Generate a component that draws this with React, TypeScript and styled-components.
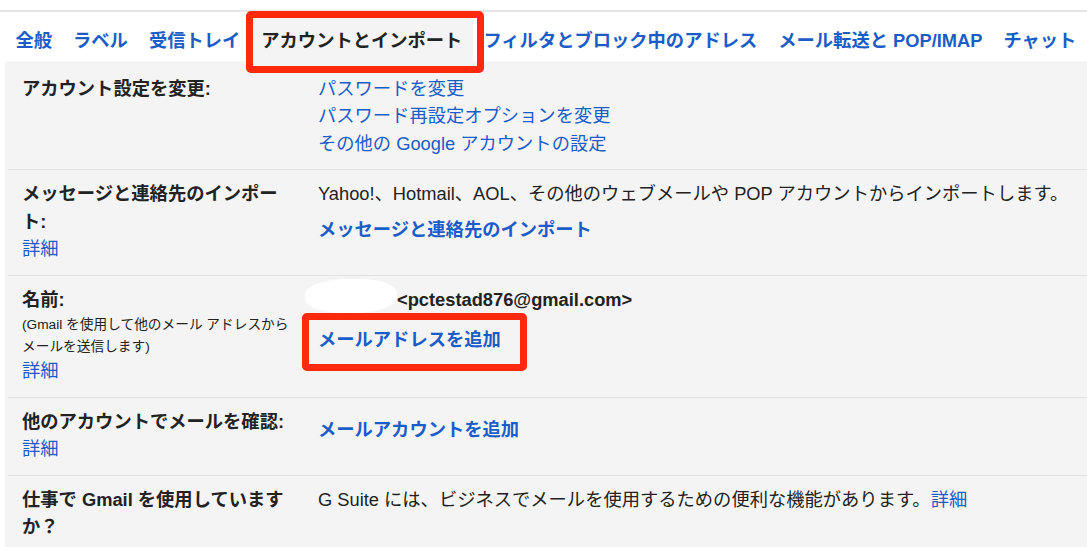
import React from "react";
import styled, { createGlobalStyle } from "styled-components";

const GlobalStyle = createGlobalStyle`
    html, body {
        margin: 0;
        padding: 0;
        background: #ffffff;
    }

    body {
        font-family: "Liberation Sans", "Noto Sans CJK JP", sans-serif;
        color: #222222;
        overflow: hidden;
    }
`;

const Page = styled.div`
    width: 1087px;
    height: 547px;
    padding-top: 10px;
    box-sizing: border-box;
    overflow: hidden;
`;

const TabBar = styled.nav`
    border-top: 2px solid #e6e6e6;
    display: flex;
    padding-left: 5px;
    white-space: nowrap;
`;

const Tab = styled.a<{ $active?: boolean }>`
    position: relative;
    display: block;
    padding: 15px 10.5px 6px;
    font-size: 18.3px;
    line-height: 27.5px;
    font-weight: bold;
    color: ${props => props.$active ? "#222222" : "#1b5dc8"};
    background: ${props => props.$active ? "#f4f4f4" : "transparent"};
    cursor: pointer;

    ${props => props.$active && `
        &::after {
            content: "";
            position: absolute;
            left: -5px;
            right: -11px;
            top: -1px;
            bottom: -12px;
            border: 7px solid #ff2a0c;
            border-radius: 5px;
            z-index: 2;
        }
    `}
`;

const Panel = styled.div`
    margin-left: 5px;
    padding-left: 3px;
    background: #f4f4f4;
    height: 100%;
`;

const Row = styled.div<{ $first?: boolean }>`
    display: flex;
    gap: 22px;
    padding: ${props => props.$first ? "14px" : "10px"} 0 12px 14px;
    border-bottom: 1px solid #e2e2e2;
    font-size: 18.3px;
    line-height: 27.5px;
`;

const Label = styled.div`
    width: 274px;
    flex-shrink: 0;
`;

const LabelTitle = styled.div`
    font-weight: bold;
`;

const Note = styled.div`
    font-size: 13.7px;
    line-height: 21.5px;
    margin-top: 1px;
`;

const Content = styled.div`
    flex: 1;
    white-space: nowrap;
`;

const Link = styled.a`
    display: block;
    color: #1b5dc8;
    cursor: pointer;
`;

const InlineLink = styled.a`
    color: #1b5dc8;
    cursor: pointer;
`;

const ActionLink = styled.a<{ $gap?: number; $marked?: boolean }>`
    position: relative;
    display: inline-block;
    margin-top: ${props => props.$gap ?? 8}px;
    font-weight: bold;
    color: #1b5dc8;
    cursor: pointer;

    ${props => props.$marked && `
        &::after {
            content: "";
            position: absolute;
            left: -16px;
            right: -26px;
            top: -13px;
            bottom: -17px;
            border: 7px solid #ff2a0c;
            border-radius: 5px;
        }
    `}
`;

const Redacted = styled.span`
    display: inline-block;
    width: 92px;
    height: 34px;
    margin: -8px 0 0 -13px;
    vertical-align: -7px;
    background: #ffffff;
    border-radius: 46% 40% 48% 42%;
`;

const Email = styled.span`
    font-weight: bold;
`;

const tabs = [
    "全般",
    "ラベル",
    "受信トレイ",
    "アカウントとインポート",
    "フィルタとブロック中のアドレス",
    "メール転送と POP/IMAP",
    "チャット",
];

export default function App() {
    return (
        <Page>
            <GlobalStyle />
            <TabBar>
                {tabs.map(t => (
                    <Tab key={t} $active={t === "アカウントとインポート"}>{t}</Tab>
                ))}
            </TabBar>
            <Panel>
                <Row $first>
                    <Label>
                        <LabelTitle>アカウント設定を変更:</LabelTitle>
                    </Label>
                    <Content>
                        <Link>パスワードを変更</Link>
                        <Link>パスワード再設定オプションを変更</Link>
                        <Link>その他の Google アカウントの設定</Link>
                    </Content>
                </Row>
                <Row>
                    <Label>
                        <LabelTitle>メッセージと連絡先のインポート:</LabelTitle>
                        <Link>詳細</Link>
                    </Label>
                    <Content>
                        <div>Yahoo!、Hotmail、AOL、その他のウェブメールや POP アカウントからインポートします。</div>
                        <ActionLink>メッセージと連絡先のインポート</ActionLink>
                    </Content>
                </Row>
                <Row>
                    <Label>
                        <LabelTitle>名前:</LabelTitle>
                        <Note>(Gmail を使用して他のメール アドレスからメールを送信します)</Note>
                        <Link>詳細</Link>
                    </Label>
                    <Content>
                        <div>
                            <Redacted />
                            <Email>&lt;pctestad876@gmail.com&gt;</Email>
                        </div>
                        <ActionLink $gap={13} $marked>メールアドレスを追加</ActionLink>
                    </Content>
                </Row>
                <Row>
                    <Label>
                        <LabelTitle>他のアカウントでメールを確認:</LabelTitle>
                        <Link>詳細</Link>
                    </Label>
                    <Content>
                        <ActionLink>メールアカウントを追加</ActionLink>
                    </Content>
                </Row>
                <Row>
                    <Label>
                        <LabelTitle>仕事で Gmail を使用していますか？</LabelTitle>
                    </Label>
                    <Content>
                        G Suite には、ビジネスでメールを使用するための便利な機能があります。<InlineLink>詳細</InlineLink>
                    </Content>
                </Row>
            </Panel>
        </Page>
    );
}
